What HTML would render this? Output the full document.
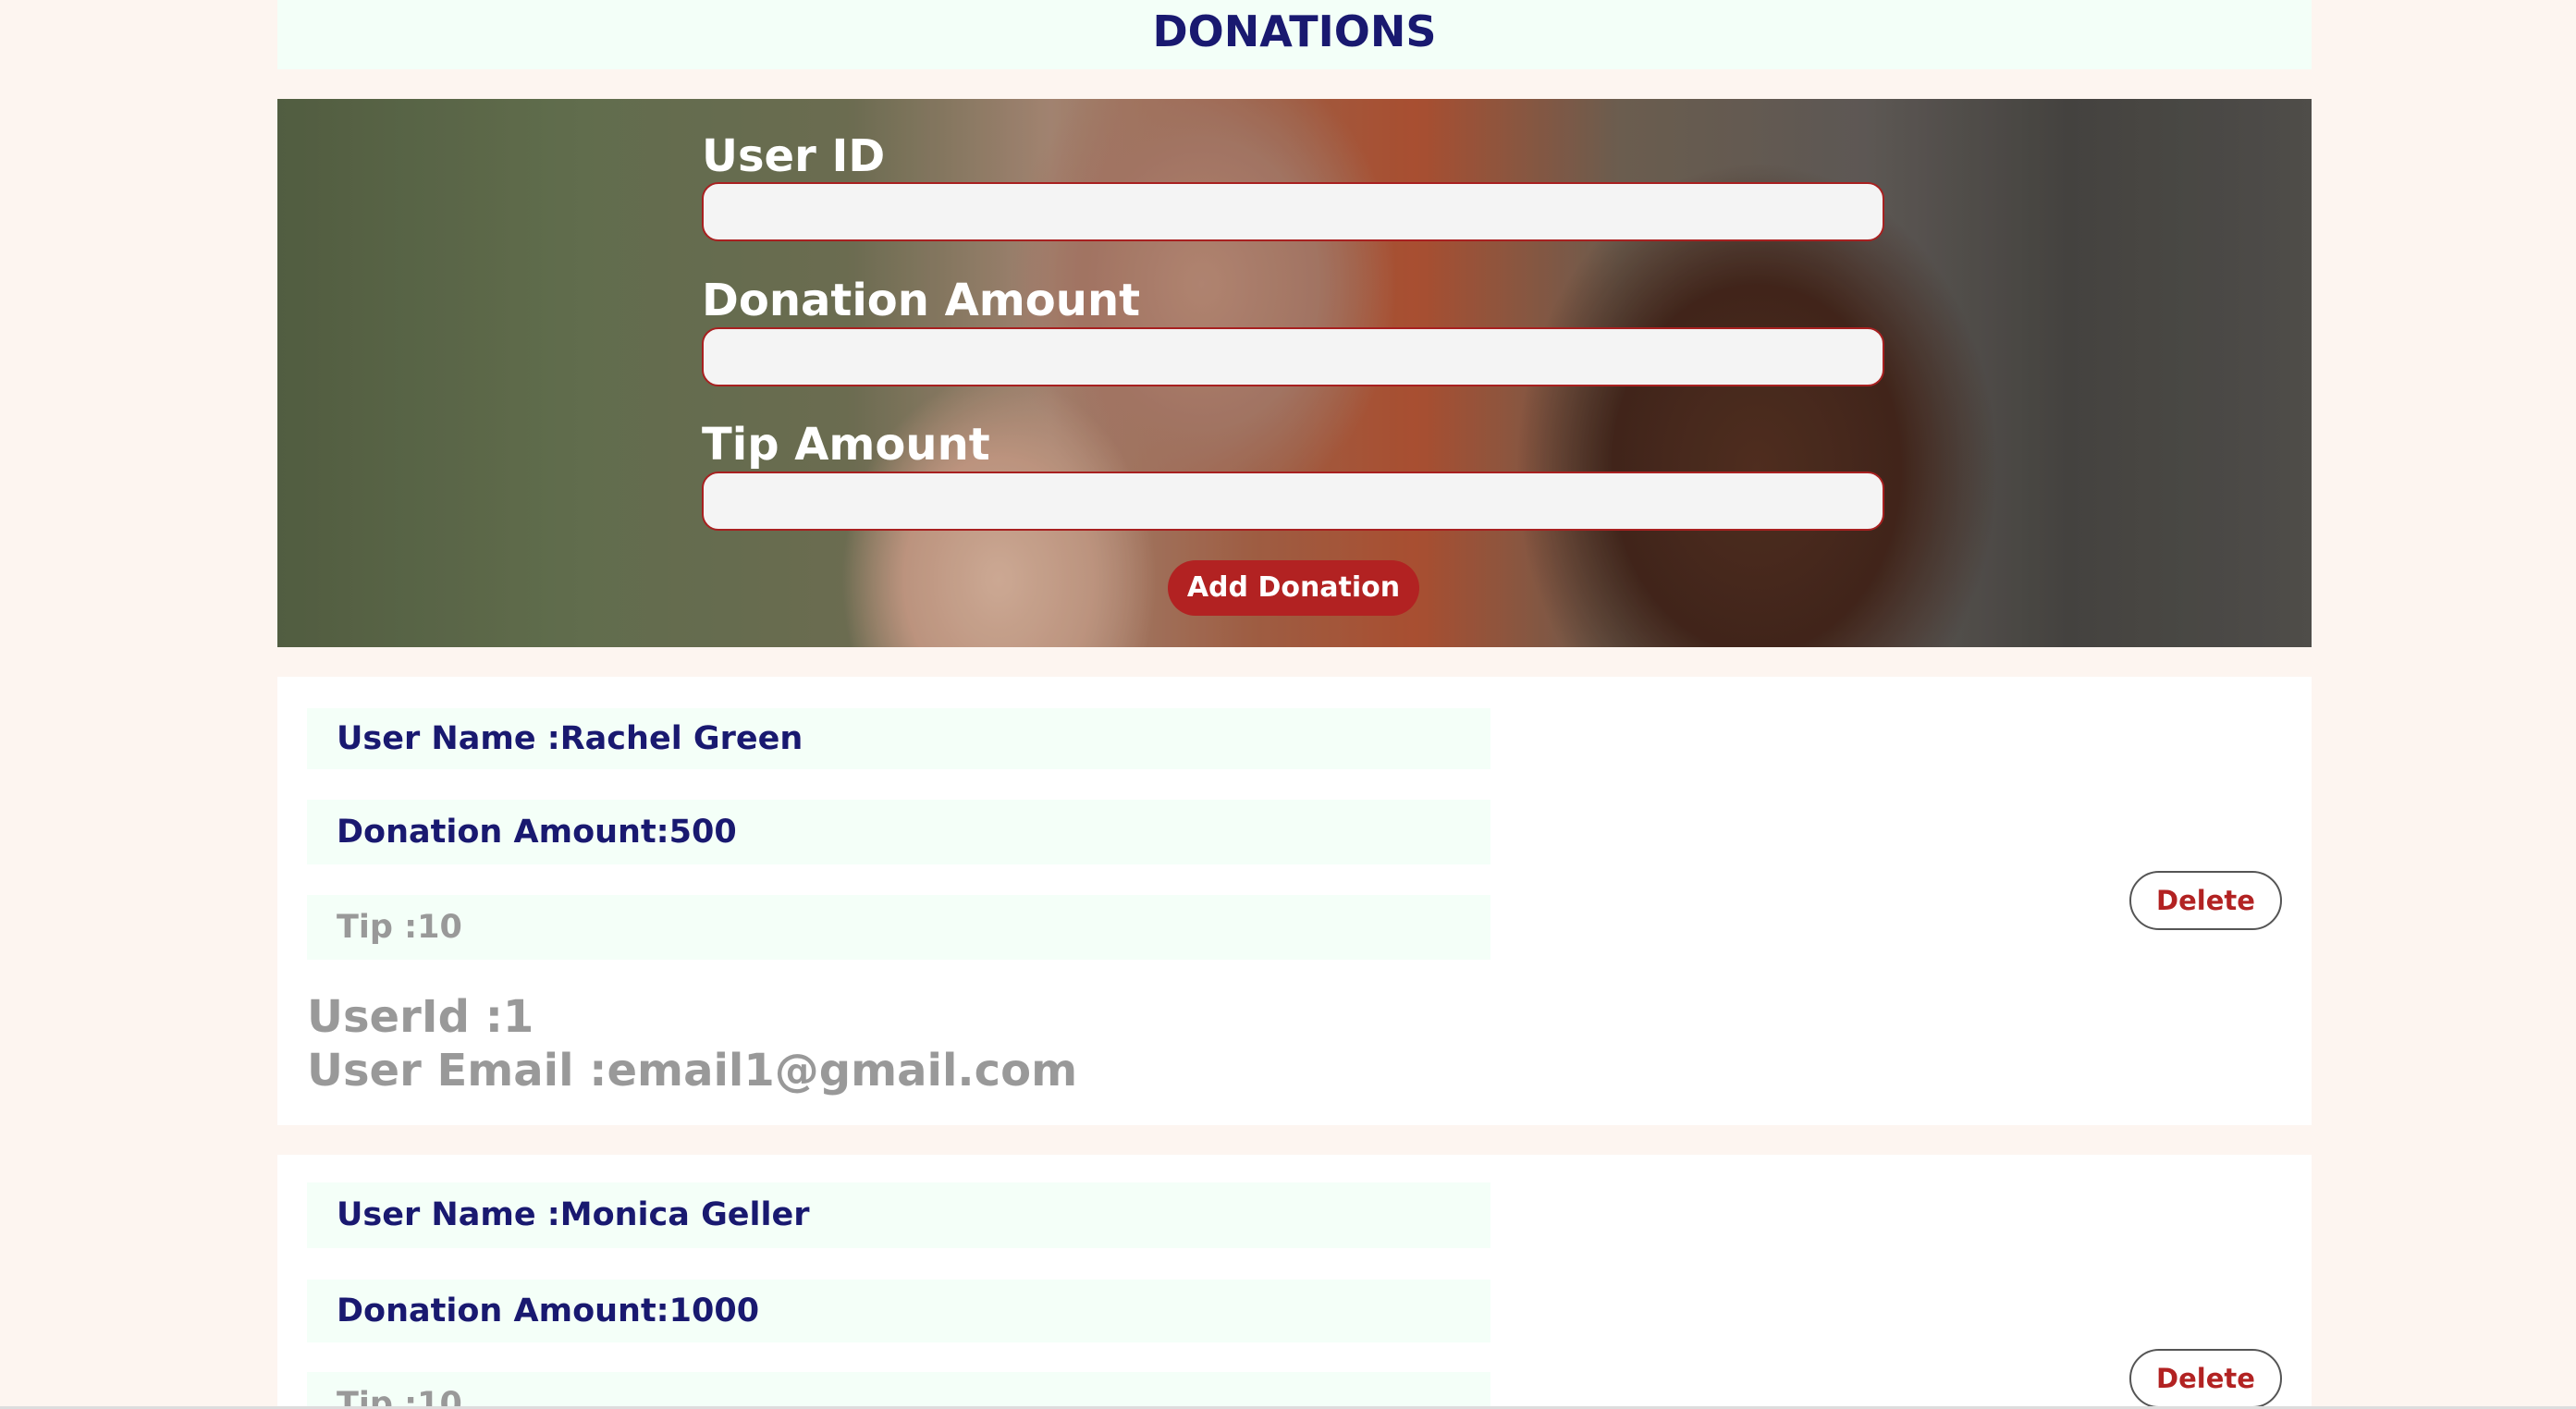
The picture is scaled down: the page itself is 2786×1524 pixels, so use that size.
<!DOCTYPE html>
<html><head><meta charset="utf-8"><style>
*{box-sizing:border-box;margin:0;padding:0}
html,body{width:2786px;height:1524px;overflow:hidden;background:#fdf5f0;font-family:"DejaVu Sans","Liberation Sans",sans-serif;font-weight:bold}
.hdr{position:absolute;left:300px;top:0;width:2200px;height:75px;background:#f3fff8;text-align:center;color:#191970;font-size:46px;line-height:68px}
.hero{position:absolute;left:300px;top:107px;width:2200px;height:593px;overflow:hidden;
background:
radial-gradient(ellipse 170px 220px at 780px 520px,#e8c0a8 0%,#d6a890 60%,rgba(200,150,120,0) 100%),
radial-gradient(ellipse 210px 260px at 1000px 200px,#c89680 0%,#b88470 60%,rgba(180,130,110,0) 100%),
radial-gradient(ellipse 260px 330px at 1600px 400px,#5a3424 0%,#4a2a1e 60%,rgba(70,40,30,0) 100%),
linear-gradient(90deg,#5d6a4a 0%,#6f7d58 15%,#7a7b5c 28%,#b89580 38%,#b46a4c 48%,#c05a38 56%,#7a6a5a 66%,#6a6460 78%,#4e4c48 88%,#5a5854 100%)}
.hero::after{content:"";position:absolute;inset:0;background:rgba(0,0,0,0.12)}
.lbl{position:absolute;left:459px;color:#fff;font-size:48px;z-index:2;line-height:1}
.inp{position:absolute;left:459px;width:1279px;height:64px;background:#f4f4f4;border:2px solid #a82020;border-radius:18px;z-index:2}
.btn{position:absolute;left:963px;top:499px;width:272px;height:60px;background:#b22222;border-radius:30px;color:#fff;font-size:30px;text-align:center;line-height:60px;z-index:2}
.card{position:absolute;left:300px;width:2200px;background:#fff;overflow:hidden}
.row{position:absolute;left:32px;width:1280px;background:#f4fff8;font-size:35px;padding-left:32px;color:#191970}
.gray{color:#999}
.del{position:absolute;left:2003px;width:165px;height:64px;border:2px solid #555;border-radius:32px;color:#b22222;font-size:29px;text-align:center;line-height:60px}
.big{position:absolute;left:32px;color:#999;font-size:48px;line-height:58px}
</style></head><body>
<div class="hdr">DONATIONS</div>
<div class="hero">
<div class="lbl" style="top:38px">User ID</div>
<div class="inp" style="top:90px"></div>
<div class="lbl" style="top:194px">Donation Amount</div>
<div class="inp" style="top:247px"></div>
<div class="lbl" style="top:350px">Tip Amount</div>
<div class="inp" style="top:403px"></div>
<div class="btn">Add Donation</div>
</div>
<div class="card" style="top:732px;height:485px">
<div class="row" style="top:34px;height:66px;line-height:66px">User Name :Rachel Green</div>
<div class="row" style="top:133px;height:70px;line-height:70px">Donation Amount:500</div>
<div class="row gray" style="top:236px;height:70px;line-height:70px">Tip :10</div>
<div class="big" style="top:339px">UserId :1<br>User Email :email1@gmail.com</div>
<div class="del" style="top:210px">Delete</div>
</div>
<div class="card" style="top:1249px;height:272px">
<div class="row" style="top:30px;height:71px;line-height:71px">User Name :Monica Geller</div>
<div class="row" style="top:135px;height:68px;line-height:68px">Donation Amount:1000</div>
<div class="row gray" style="top:235px;height:70px;line-height:70px">Tip :10</div>
<div class="del" style="top:210px">Delete</div>
</div>
<div style="position:absolute;left:0;top:1521px;width:2786px;height:3px;background:#ddd"></div>
</body></html>
